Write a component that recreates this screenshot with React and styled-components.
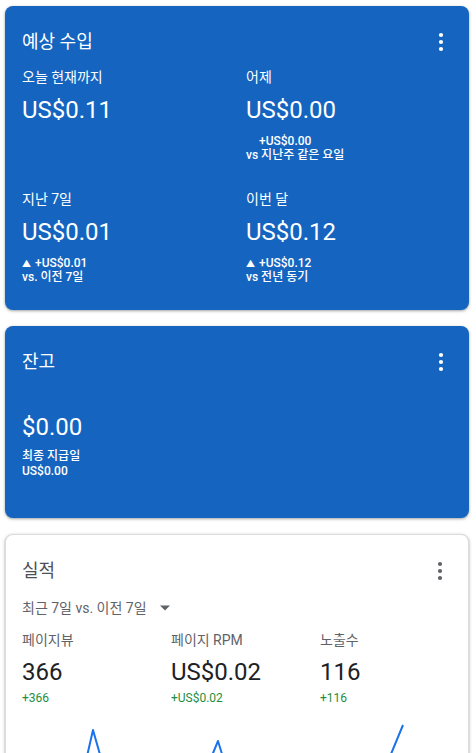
import styled, { createGlobalStyle } from "styled-components";

const GlobalStyle = createGlobalStyle`
  body {
    margin: 0;
    background: #fff;
    font-family: Roboto, "Noto Sans CJK KR", sans-serif;
  }
`;

const Page = styled.div`
  display: flex;
  flex-direction: column;
  gap: 16px;
  padding: 6px 7px 0 5px;
`;

const Card = styled.section`
  border-radius: 8px;
  padding: 20px 16px ${(p) => p.$pb}px ${(p) => (p.$light ? 16 : 17)}px;
  background: ${(p) => (p.$light ? "#fff" : "#1565c0")};
  color: ${(p) => (p.$light ? "#202124" : "#fff")};
  border: ${(p) => (p.$light ? "1px solid #dadce0" : "none")};
  box-shadow: 0 1px 2px rgba(60, 64, 67, 0.3), 0 1px 3px 1px rgba(60, 64, 67, 0.15);
  overflow: hidden;
`;

const Header = styled.div`
  display: flex;
  align-items: center;
  justify-content: space-between;
  height: 32px;
`;

const Title = styled.h2`
  margin: 0;
  font-size: 18px;
  font-weight: 400;
  line-height: 32px;
  color: ${(p) => (p.$light ? "#4d5156" : "#fff")};
`;

const Kebab = styled.svg`
  width: 24px;
  height: 28px;
  fill: ${(p) => (p.$light ? "#5f6368" : "#fff")};
`;

const MenuIcon = ({ light }) => (
  <Kebab $light={light} viewBox="0 0 24 28">
    <circle cx="12" cy="7" r="2.1" />
    <circle cx="12" cy="14" r="2.1" />
    <circle cx="12" cy="21" r="2.1" />
  </Kebab>
);

const EarningsGrid = styled.div`
  display: grid;
  grid-template-columns: 224px 1fr;
  row-gap: 27px;
  margin-top: 9px;
`;

const Label = styled.div`
  height: 20px;
  font-size: 14px;
  line-height: 20px;
  color: ${(p) => (p.$light ? "#5f6368" : "#fff")};
`;

const Value = styled.div`
  height: 32px;
  margin-top: ${(p) => p.$mt ?? 7}px;
  font-size: 24px;
  line-height: 32px;
  color: ${(p) => (p.$light ? "#202124" : "#fff")};
`;

const SubBlock = styled.div`
  margin-top: ${(p) => p.$mt ?? 8}px;
  font-size: 12px;
  font-weight: 500;
`;

const SubLine = styled.div`
  height: ${(p) => p.$lh ?? 14}px;
  line-height: ${(p) => p.$lh ?? 14}px;
  white-space: nowrap;
`;

const Arrow = styled.span`
  display: inline-block;
  width: 13px;
  font-size: 9px;
  visibility: ${(p) => (p.$hidden ? "hidden" : "visible")};
`;

const Earning = ({ label, value, delta, compare, flat }) => (
  <div>
    <Label>{label}</Label>
    <Value>{value}</Value>
    {delta && (
      <SubBlock>
        <SubLine>
          <Arrow $hidden={flat}>▲</Arrow>
          {delta}
        </SubLine>
        <SubLine>{compare}</SubLine>
      </SubBlock>
    )}
  </div>
);

const Range = styled.div`
  display: flex;
  align-items: center;
  gap: 12px;
  height: 20px;
  margin-top: 11px;
  font-size: 14px;
  line-height: 20px;
  color: #5f6368;
`;

const Caret = styled.svg`
  width: 12px;
  height: 8px;
  fill: #5f6368;
`;

const StatsGrid = styled.div`
  display: grid;
  grid-template-columns: 149px 149px 1fr;
  margin-top: 12px;
`;

const Delta = styled.div`
  height: 16px;
  margin-top: 2px;
  font-size: 12px;
  line-height: 16px;
  color: #1e8e3e;
`;

const Chart = styled.svg`
  display: block;
  margin-top: 10px;
  width: 425px;
  height: 200px;
  overflow: visible;
`;

const stats = [
  { label: "페이지뷰", value: "366", delta: "+366" },
  { label: "페이지 RPM", value: "US$0.02", delta: "+US$0.02" },
  { label: "노출수", value: "116", delta: "+116" },
];

export default function App() {
  return (
    <>
      <GlobalStyle />
      <Page>
        <Card $pb={26}>
          <Header>
            <Title>예상 수입</Title>
            <MenuIcon />
          </Header>
          <EarningsGrid>
            <Earning label="오늘 현재까지" value="US$0.11" />
            <Earning
              label="어제"
              value="US$0.00"
              delta="+US$0.00"
              compare="vs 지난주 같은 요일"
              flat
            />
            <Earning
              label="지난 7일"
              value="US$0.01"
              delta="+US$0.01"
              compare="vs. 이전 7일"
            />
            <Earning
              label="이번 달"
              value="US$0.12"
              delta="+US$0.12"
              compare="vs 전년 동기"
            />
          </EarningsGrid>
        </Card>

        <Card $pb={39}>
          <Header>
            <Title>잔고</Title>
            <MenuIcon />
          </Header>
          <Value $mt={33}>$0.00</Value>
          <SubBlock $mt={6}>
            <SubLine $lh={15}>최종 지급일</SubLine>
            <SubLine $lh={15}>US$0.00</SubLine>
          </SubBlock>
        </Card>

        <Card $light $pb={20}>
          <Header>
            <Title $light>실적</Title>
            <MenuIcon light />
          </Header>
          <Range>
            최근 7일 vs. 이전 7일
            <Caret viewBox="0 0 12 8">
              <path d="M1 1.5h10L6 6.5z" />
            </Caret>
          </Range>
          <StatsGrid>
            {stats.map((s) => (
              <div key={s.label}>
                <Label $light>{s.label}</Label>
                <Value $light $mt={6}>
                  {s.value}
                </Value>
                <Delta>{s.delta}</Delta>
              </div>
            ))}
          </StatsGrid>
          <Chart viewBox="0 0 425 200">
            <polyline
              points="40,150 71,14 124,200 196,25 250,200 302,200 381,9"
              fill="none"
              stroke="#1a73e8"
              strokeWidth="2"
              strokeLinejoin="round"
            />
          </Chart>
        </Card>
      </Page>
    </>
  );
}
